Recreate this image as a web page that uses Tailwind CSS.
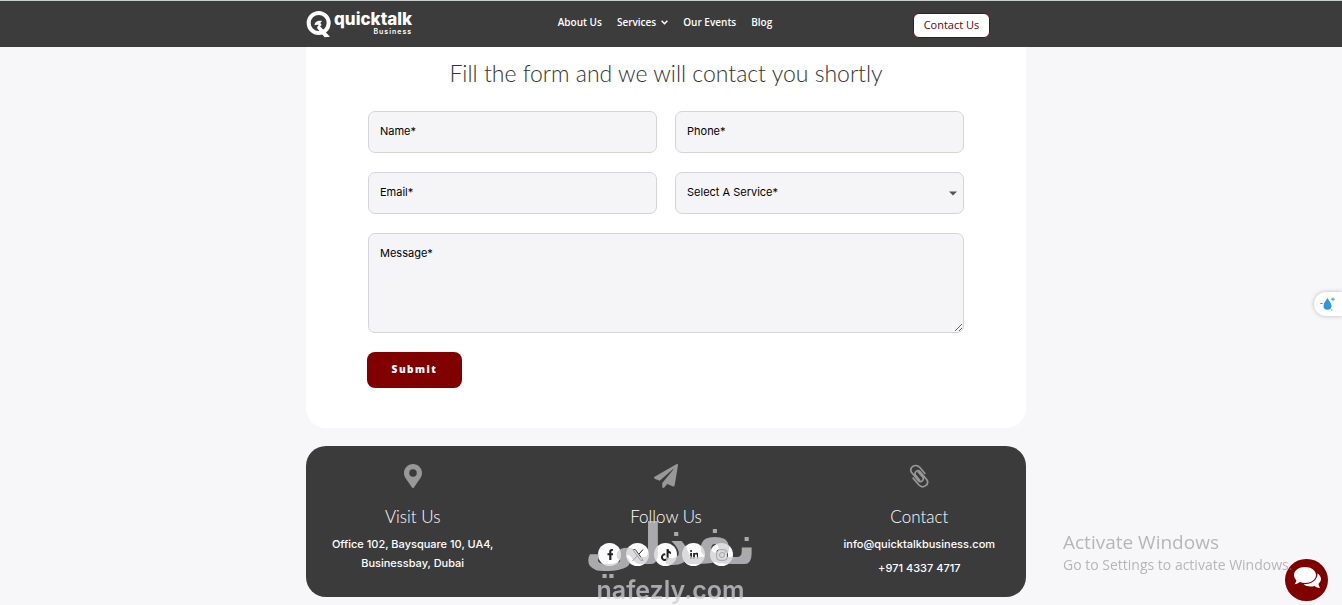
<!DOCTYPE html>
<html lang="en">
<head>
    <meta charset="UTF-8">
    <meta name="viewport" content="width=device-width, initial-scale=1.0">
    <title>Quicktalk Business - Contact</title>
    <script src="https://cdn.jsdelivr.net/npm/@tailwindcss/browser@4"></script>
</head>

<body class="bg-[#f7f6f8] min-h-screen font-['Inter',sans-serif] text-black">

    <!-- Header -->
    <header class="bg-[#3c3c3c] border-t border-[#c9cfcc] h-[47px] pr-[10px]">
        <div class="max-w-[720px] mx-auto h-full pr-9 flex items-center justify-between">
            <a href="#" class="flex items-center gap-0.5 w-[111px] text-white">
                <svg class="w-[26px] h-[27px] shrink-0" viewBox="30 31 78 81" fill="currentColor">
                    <circle cx="68" cy="67" r="30" fill="none" stroke="currentColor" stroke-width="12"/>
                    <path d="M56 74C55 65 64 59 78 61L73 67L77 73L72 77L102 108L86 110L66 86C61 81 65 75 69 73C63 71 59 72 56 74Z"/>
                </svg>
                <span class="flex flex-col items-end">
                    <span class="text-[17px] leading-[15px] font-extrabold">quicktalk</span>
                    <span class="text-[7px] leading-[9px] font-semibold tracking-[1px]">Business</span>
                </span>
            </a>
            <nav class="flex items-center gap-[15px] font-['Open_Sans',sans-serif] text-[10px] leading-4 font-semibold text-white pb-1">
                <a href="#">About Us</a>
                <a href="#" class="flex items-center gap-[5px]">Services
                    <svg class="w-[7px] h-[5px]" viewBox="0 0 7 5" fill="none" stroke="currentColor" stroke-width="1.500"><path d="M.6.8L3.500 3.700L6.400.8"/></svg>
                </a>
                <a href="#">Our Events</a>
                <a href="#">Blog</a>
            </nav>
            <button class="w-[77px] h-[25px] mt-[3px] rounded-md border border-[#7d0000] bg-white font-['Open_Sans',sans-serif] text-[11px] text-[#6d0010]">Contact Us</button>
        </div>
    </header>

    <main class="pr-[10px]">
        <!-- Contact form -->
        <section class="max-w-[720px] mx-auto bg-white rounded-b-[20px] px-[62px] pt-3 pb-10">
            <h2 class="text-center font-['Lato',sans-serif] font-light text-[23px] leading-7 text-[#333]">Fill the form and we will contact you shortly</h2>
            <form class="mt-6 grid grid-cols-2 gap-x-[18px] gap-y-[19px] text-[11px]">
                <input type="text" aria-label="Name" placeholder="Name*" class="w-full h-[42px] px-[11px] pb-0.5 rounded-[7px] border border-[#d5d5d9] bg-[#f5f4f6] placeholder:text-black">
                <input type="tel" aria-label="Phone" placeholder="Phone*" class="w-full h-[42px] px-[11px] pb-0.5 rounded-[7px] border border-[#d5d5d9] bg-[#f5f4f6] placeholder:text-black">
                <input type="email" aria-label="Email" placeholder="Email*" class="w-full h-[42px] px-[11px] pb-0.5 rounded-[7px] border border-[#d5d5d9] bg-[#f5f4f6] placeholder:text-black">
                <div class="relative">
                    <select aria-label="Service" class="appearance-none w-full h-[42px] px-[11px] pb-0.5 rounded-[7px] border border-[#d5d5d9] bg-[#f5f4f6]">
                        <option>Select A Service*</option>
                    </select>
                    <svg class="absolute right-[7px] top-[19px] w-2 h-[5px] pointer-events-none" viewBox="0 0 8 5" fill="#555"><path d="M0 .5H8L4 4.500Z"/></svg>
                </div>
                <textarea aria-label="Message" placeholder="Message*" class="col-span-2 block w-full h-[100px] px-[11px] py-3 leading-[14px] rounded-[7px] border border-[#d5d5d9] bg-[#f5f4f6] placeholder:text-black resize"></textarea>
                <button type="submit" class="-ml-px w-[95px] h-9 pb-0.5 rounded-[8px] bg-[#800000] font-['Open_Sans',sans-serif] text-[10px] font-extrabold tracking-[1.5px] text-white">Submit</button>
            </form>
        </section>

        <!-- Footer -->
        <footer class="max-w-[720px] mx-auto mt-[18px] bg-[#3c3b3c] rounded-[20px] px-5 pt-[18px] pb-[19px] grid grid-cols-3 gap-20 text-center text-white text-[11px] leading-[19px] font-medium">
            <div class="flex flex-col items-center">
                <svg class="h-6 w-[18px]" viewBox="0 0 384 512" fill="#989898"><path d="M172 501.700C27 291 0 269.400 0 192 0 86 86 0 192 0s192 86 192 192c0 77.400-27 99-172 309.700a24 24 0 0 1-40 0zM192 272a80 80 0 1 0 0-160 80 80 0 0 0 0 160z"/></svg>
                <h3 class="mt-4 font-['Lato',sans-serif] font-light text-[17px] leading-[26px]">Visit Us</h3>
                <p class="mt-[5px] whitespace-nowrap">Office 102, Baysquare 10, UA4,<br>Businessbay, Dubai</p>
            </div>
            <div class="flex flex-col items-center">
                <svg class="w-6 h-6" viewBox="0 0 512 512" fill="#989898"><path d="M476 3.200L12.500 270.600c-18.100 10.400-15.800 35.600 2.200 43.200L121 358.400l287.300-253.200c5.500-4.900 13.300 2.600 8.600 8.300L176 407v80.500c0 23.600 28.500 32.900 42.500 15.800L282 426l124.600 52.200c14.200 6 30.400-2.900 33-18.200l72-432C515 7.800 493.300-6.800 476 3.200z"/></svg>
                <h3 class="mt-4 font-['Lato',sans-serif] font-light text-[17px] leading-[26px]">Follow Us</h3>
                <div class="mt-[13px] flex gap-[5px] text-[#222]">
                    <a href="#" aria-label="Facebook" class="w-[23px] h-[23px] rounded-full bg-white flex items-center justify-center">
                        <svg class="h-[11px]" viewBox="0 0 320 512" fill="currentColor"><path d="M279 288l14-93h-89v-60c0-25 12-50 52-50h41V7s-37-7-72-7c-73 0-121 44-121 125v70H23v93h81v224h100V288z"/></svg>
                    </a>
                    <a href="#" aria-label="X" class="w-[23px] h-[23px] rounded-full bg-white flex items-center justify-center">
                        <svg class="h-3" viewBox="0 0 12 12" fill="none" stroke="currentColor"><path d="M.8.6H3.300L11.200 11.400H8.700ZM11 .5L6.800 5.300M5.200 7L1 11.500"/></svg>
                    </a>
                    <a href="#" aria-label="TikTok" class="w-[23px] h-[23px] rounded-full bg-white flex items-center justify-center">
                        <svg class="h-3" viewBox="0 0 448 512" fill="currentColor"><path d="M448 210a210 210 0 0 1-123-39v179A163 163 0 1 1 185 188v90a75 75 0 1 0 52 71V0h88a121 121 0 0 0 2 22 122 122 0 0 0 54 80 121 121 0 0 0 67 20z"/></svg>
                    </a>
                    <a href="#" aria-label="LinkedIn" class="w-[23px] h-[23px] rounded-full bg-white flex items-center justify-center">
                        <svg class="h-[10px]" viewBox="0 0 448 512" fill="currentColor"><path d="M100 448H7V149h93zM54 108a54 54 0 1 1 0-108 54 54 0 0 1 0 108zm394 340h-93V302c0-34-1-79-48-79-49 0-56 38-56 77v148h-93V149h89v41h1c13-24 43-48 88-48 94 0 112 62 112 142z"/></svg>
                    </a>
                    <a href="#" aria-label="Instagram" class="w-[23px] h-[23px] rounded-full bg-white flex items-center justify-center">
                        <svg class="h-3" viewBox="0 0 12 12" fill="none" stroke="currentColor"><rect x=".7" y=".7" width="10.600" height="10.600" rx="3"/><circle cx="6" cy="6" r="2.500"/><circle cx="9" cy="3" r=".3"/></svg>
                    </a>
                </div>
            </div>
            <div class="flex flex-col items-center">
                <svg class="w-5 h-6" viewBox="265 71 60 72" fill="none" stroke="#989898" stroke-width="5"><path d="M314 101L297 81C286 69 264 80 272 95L293 121C301 129 312 118 306 110L292 94M276 112L295 134C306 146 327 134 319 119L298 94C290 86 279 97 285 105L298 121"/></svg>
                <h3 class="mt-4 font-['Lato',sans-serif] font-light text-[17px] leading-[26px]">Contact</h3>
                <a href="#" class="mt-[5px]">info@quicktalkbusiness.com</a>
                <a href="#" class="mt-[5px]">+971 4337 4717</a>
            </div>
        </footer>
    </main>

    <!-- Watermark -->
    <div class="fixed left-[589px] bottom-0 w-[163px] flex flex-col items-center text-[#cfcfd2] opacity-75 pointer-events-none whitespace-nowrap">
        <span lang="ar" dir="rtl" class="font-['DejaVu_Sans',sans-serif] font-bold text-[56px] leading-[60px]">نفذلي</span>
        <span class="font-semibold text-[25px] leading-[30px]">nafezly.com</span>
    </div>

    <!-- Side widget -->
    <button aria-label="Assistant" class="fixed right-0 top-[292px] w-7 h-6 rounded-l-full bg-white shadow-[0_0_4px_rgba(0,0,0,0.25)] flex items-center justify-center">
        <svg class="w-4 h-4" viewBox="0 0 16 16" fill="none" stroke="#4a9fb8"><path d="M7.500 2C9 5 11.500 7 11.500 9.800A4 4 0 0 1 3.500 9.800C3.500 7 6 5 7.500 2Z" fill="#2c96dc" stroke="none"/><path d="M13 1.500V5M11.200 3.200H14.800M.2 7.500H2.700M11 14H12.500"/></svg>
    </button>

    <!-- Chat button -->
    <button aria-label="Chat" class="fixed right-[14px] bottom-[4px] w-[43px] h-[42px] rounded-full bg-[#800000] flex items-center justify-center">
        <svg class="w-7 h-[22px] mb-1" viewBox="0 0 28 22" fill="#fff"><path d="M12 0C18 0 23 3.500 23 8S18 16 12 16C10.200 16 8.500 15.700 7 15.100C5.500 16.300 3.500 17.200 1.500 17.200C2.500 16 3.200 14.500 3.400 13.200C1.800 11.800 1 10 1 8C1 3.500 6 0 12 0Z"/><path d="M24.500 6.500C26.500 7.800 28 9.800 28 12C28 13.900 27 15.500 25.500 16.800C25.700 18.500 26.500 20 27 21C24.800 21 22.800 20 21.500 19C17.500 20.200 13 19.300 10.500 17.300C18.500 17.500 24.800 13 24.500 6.500Z"/></svg>
    </button>

    <!-- Windows activation notice -->
    <div class="fixed left-[1063px] bottom-[30px] font-['Open_Sans',sans-serif] text-[#8c8a8c]/60 whitespace-nowrap pointer-events-none">
        <p class="text-[19px] leading-[26px]">Activate Windows</p>
        <p class="text-sm leading-5">Go to Settings to activate Windows.</p>
    </div>

</body>
</html>
